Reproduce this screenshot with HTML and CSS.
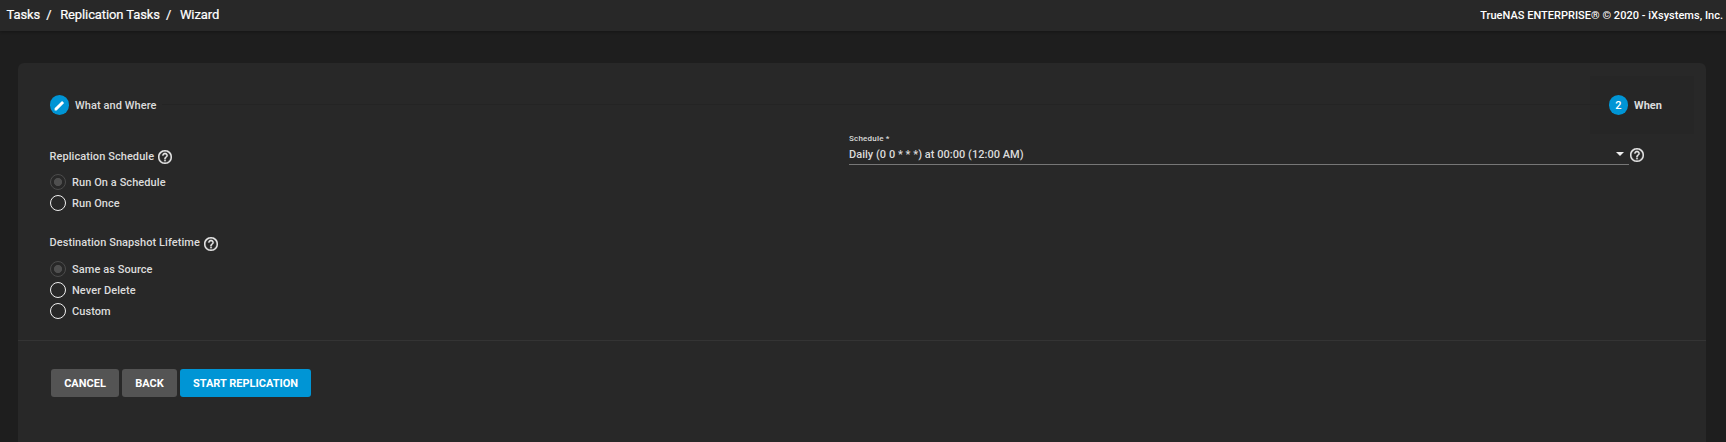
FILE: index.html
```html
<!DOCTYPE html>
<html lang="en">
<head>
<meta charset="utf-8">
<title>Replication Wizard</title>
<link rel="stylesheet" href="styles.css">
</head>
<body>
<svg class="defs" aria-hidden="true">
  <symbol id="help" viewBox="2 2 20 20"><path d="M11 18h2v-2h-2v2zm1-16C6.480 2 2 6.480 2 12s4.480 10 10 10 10-4.480 10-10S17.520 2 12 2zm0 18c-4.410 0-8-3.590-8-8s3.590-8 8-8 8 3.590 8 8-3.590 8-8 8zm0-14c-2.210 0-4 1.790-4 4h2c0-1.100.9-2 2-2s2 .9 2 2c0 2-3 1.750-3 5h2c0-2.250 3-2.500 3-5 0-2.210-1.790-4-4-4z"/></symbol>
</svg>
<header class="topbar">
  <nav class="crumbs"><a>Tasks</a><span class="sep">/</span><a>Replication Tasks</a><span class="sep">/</span><a>Wizard</a></nav>
  <div class="copyright">TrueNAS ENTERPRISE® © 2020 - iXsystems, Inc.</div>
</header>
<main class="card">
  <div class="stepper">
    <div class="step">
      <span class="badge"><svg class="pencil" viewBox="0 0 24 24"><path d="M3 17.250V21h3.750L20.500 7.250 16.750 3.500z"/></svg></span>
      <span class="step-label">What and Where</span>
    </div>
    <div class="step-line"></div>
    <div class="step active">
      <span class="badge"><span>2</span></span>
      <span class="step-label">When</span>
    </div>
  </div>
  <div class="form">
    <div class="column">
      <section class="group">
        <div class="group-title"><span>Replication Schedule</span><svg class="help"><use href="#help"/></svg></div>
        <div class="radio"><i class="dot selected"></i><span>Run On a Schedule</span></div>
        <div class="radio"><i class="dot"></i><span>Run Once</span></div>
      </section>
      <section class="group lifetime">
        <div class="group-title"><span>Destination Snapshot Lifetime</span><svg class="help"><use href="#help"/></svg></div>
        <div class="radio"><i class="dot selected"></i><span>Same as Source</span></div>
        <div class="radio"><i class="dot"></i><span>Never Delete</span></div>
        <div class="radio"><i class="dot"></i><span>Custom</span></div>
      </section>
    </div>
    <div class="column schedule">
      <div class="field">
        <div class="field-label">Schedule *</div>
        <div class="select"><span>Daily (0 0 * * *) at 00:00 (12:00 AM)</span><i class="caret"></i></div>
      </div>
      <svg class="help"><use href="#help"/></svg>
    </div>
  </div>
  <div class="actions">
    <button class="btn cancel">CANCEL</button>
    <button class="btn back">BACK</button>
    <button class="btn primary">START REPLICATION</button>
  </div>
</main>
</body>
</html>
```

FILE: styles.css
```css
* { box-sizing: border-box; }
body {
  margin: 0;
  height: 442px;
  overflow: hidden;
  display: flex;
  flex-direction: column;
  background: #1e1e1e;
  color: #dcdcdc;
  font: 500 11px/16px Roboto, sans-serif;
  letter-spacing: .07px;
}
.defs { display: none; }
.topbar {
  flex: none;
  display: flex;
  justify-content: space-between;
  height: 31px;
  padding: 7px 3px 0 6.500px;
  background: #282828;
  box-shadow: 0 1px 3px rgba(0, 0, 0, .3);
  color: #fff;
}
.crumbs { display: flex; font-size: 13px; font-weight: 400; letter-spacing: -.1px; -webkit-text-stroke: .2px #fff; }
.sep { width: 20px; padding-left: 6px; }
.copyright { padding-top: 1px; font-weight: 500; letter-spacing: .02px; }
.card {
  flex: 1;
  margin: 32px 20px 0 18px;
  border-radius: 6px 6px 0 0;
  background: #282828;
}
.stepper { display: flex; height: 72px; padding: 13px 12px 0 8px; }
.step { display: flex; align-items: center; height: 58px; padding: 0 24px; }
.step.active { width: 104px; padding: 0 0 0 19px; background: #262626; }
.step-label, .badge span { padding-top: 1px; }
.active .step-label { font-weight: 700; letter-spacing: 0; }
.badge {
  flex: none;
  display: flex;
  align-items: center;
  justify-content: center;
  width: 19px;
  height: 20px;
  margin-right: 6px;
  border-radius: 10px;
  background: #0095d5;
  color: #fff;
}
.pencil { width: 13px; height: 13px; fill: #fff; }
.step-line { flex: 1; height: 1px; margin: 28px -12px 0 -18px; background: #242424; position: relative; }
.form { display: flex; height: 205px; padding-left: 32px; }
.column { width: 799px; }
.group { height: 86px; }
.group-title { display: flex; height: 36px; margin-left: -.5px; }
.group-title span { margin-top: 14px; }
.group .help { margin: 15px 0 0 4px; }
.help { flex: none; width: 14px; height: 14px; fill: #e6e6e6; stroke: #e6e6e6; stroke-width: .4px; }
.radio { display: flex; align-items: center; height: 21px; }
.radio span { padding-top: 2px; }
.dot { width: 16px; height: 16px; margin-right: 6px; border: 1px solid #f0f0f0; border-radius: 50%; }
.dot.selected { border-color: #4c4c4c; background: radial-gradient(circle, #4f4f4f 3.700px, transparent 4.400px); }
.lifetime .group-title { height: 37px; }
.lifetime .help { margin-top: 16px; }
.schedule { display: flex; }
.field { width: 780px; }
.field-label { height: 9px; line-height: 7px; font-size: 8px; letter-spacing: .2px; }
.select {
  display: flex;
  justify-content: space-between;
  height: 21px;
  padding: 3px 5px 0 0;
  border-bottom: 1px solid #777;
  letter-spacing: .03px;
}
.caret { margin-top: 5px; height: 4px; border: 4px solid transparent; border-top-color: #eee; border-bottom: 0; }
.schedule .help { margin: 13px 0 0 1px; }
.actions { display: flex; gap: 3px; padding: 28px 33px; border-top: 1px solid #343434; }
.btn {
  height: 28px;
  padding: 1px 0 0;
  border: 0;
  border-radius: 3px;
  background: #545454;
  color: #fff;
  font: 700 11px/27px Roboto, sans-serif;
}
.cancel { width: 68px; }
.back { width: 55px; }
.primary { width: 131px; background: #0095d5; }
```
